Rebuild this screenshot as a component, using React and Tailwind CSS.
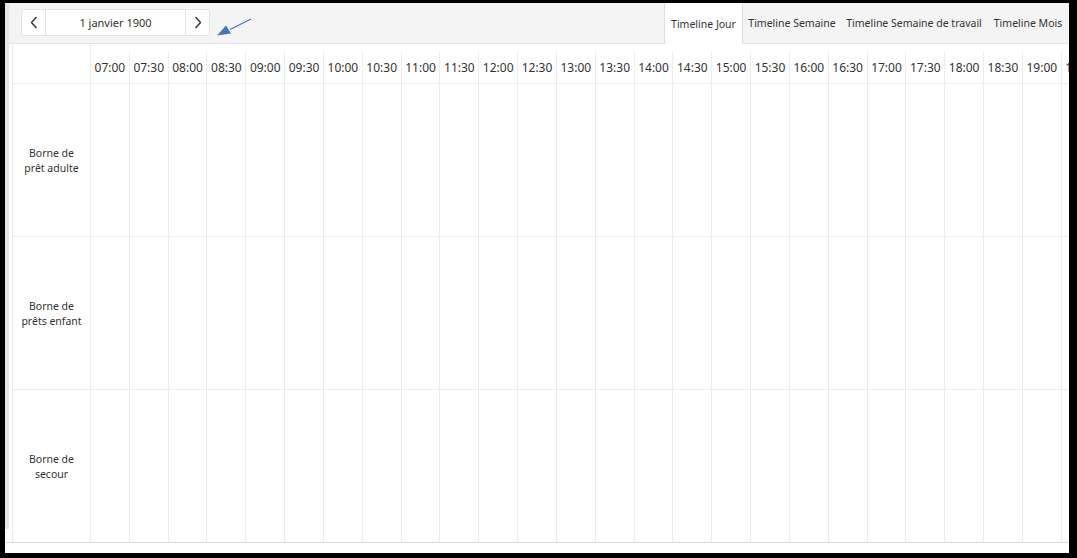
import React from "react";

const times = [];
for (let h = 7; h <= 19; h++) {
  times.push(`${String(h).padStart(2, "0")}:00`);
  times.push(`${String(h).padStart(2, "0")}:30`);
}

const resources = [
  ["Borne de", "prêt adulte"],
  ["Borne de", "prêts enfant"],
  ["Borne de", "secour"],
];

const tabs = [
  { label: "Timeline Jour", w: "w-[79px]", active: true },
  { label: "Timeline Semaine", w: "w-[98px]" },
  { label: "Timeline Semaine de travail", w: "w-[146px]" },
  { label: "Timeline Mois", w: "w-[82px]" },
];

function Slots({ header }) {
  return (
    <div className="flex h-full">
      {times.map((t) => (
        <div
          key={t}
          className="w-[38.84px] shrink-0 h-full border-r border-[#ececec] flex items-center justify-center text-[12px] text-[#333]"
        >
          {header ? t : null}
        </div>
      ))}
      {header ? (
        <div className="w-[8px] shrink-0 h-full overflow-hidden flex items-center pl-[4px] text-[12px] text-[#333]">
          <span>1</span>
        </div>
      ) : null}
    </div>
  );
}

export default function App() {
  return (
    <div
      className="w-[1077px] h-[558px] bg-black pt-[3px] pl-[5px] pr-[8px] pb-[5px]"
      style={{ fontFamily: '"Noto Sans", "Open Sans", sans-serif' }}
    >
      <div className="relative w-full h-full bg-white flex flex-col overflow-hidden">
        {/* toolbar */}
        <div className="h-[41px] shrink-0 bg-[#f4f4f4] border-b border-[#e3e3e3] flex items-stretch">
          <div className="flex-1 pl-[16px] pt-[6px]">
            <div className="w-[189px] h-[27px] bg-white border border-[#e4e4e4] rounded-[3px] flex items-stretch">
              <div className="w-[24px] border-r border-[#e4e4e4] flex items-center justify-center">
                <svg width="8" height="13" viewBox="0 0 8 13">
                  <path d="M6.5 1 L1.5 6.5 L6.5 12" fill="none" stroke="#333" strokeWidth="1.4" />
                </svg>
              </div>
              <div className="flex-1 flex items-center justify-center pt-[1px] text-[11px] text-[#333]">
                1 janvier 1900
              </div>
              <div className="w-[24px] border-l border-[#e4e4e4] flex items-center justify-center">
                <svg width="8" height="13" viewBox="0 0 8 13">
                  <path d="M1.5 1 L6.5 6.5 L1.5 12" fill="none" stroke="#333" strokeWidth="1.4" />
                </svg>
              </div>
            </div>
          </div>
          <div className="flex items-stretch">
            {tabs.map((t) => (
              <div
                key={t.label}
                className={`${t.w} flex items-center justify-center pt-[2px] text-[10.5px] text-[#333] whitespace-nowrap ${
                  t.active ? "bg-white border-x border-[#dedede] -mb-px" : ""
                }`}
              >
                {t.label}
              </div>
            ))}
          </div>
        </div>

        {/* grid */}
        <div className="h-[499px] shrink-0 border-b border-[#dcdcdc] flex">
          <div className="ml-[7px] flex-1 min-w-0 border-l border-[#ececec] flex">
            <div className="w-[78px] shrink-0 border-r border-[#ececec] flex flex-col">
              <div className="h-[40px] shrink-0 border-b border-[#ececec]" />
              {resources.map((r, i) => (
                <div
                  key={i}
                  className={`${i < 2 ? "h-[153px] border-b border-[#ececec]" : "h-[152px]"} shrink-0 flex flex-col items-center justify-center pt-[2px] text-[10.5px] leading-[15px] text-[#333] text-center`}
                >
                  <span>{r[0]}</span>
                  <span>{r[1]}</span>
                </div>
              ))}
            </div>
            <div className="flex-1 min-w-0 overflow-hidden flex flex-col">
              <div className="h-[40px] shrink-0 border-b border-[#ececec] pt-[8px]">
                <Slots header />
              </div>
              {resources.map((r, i) => (
                <div
                  key={i}
                  className={`${i < 2 ? "h-[153px] border-b border-[#ececec]" : "h-[152px]"} shrink-0`}
                >
                  <Slots />
                </div>
              ))}
            </div>
          </div>
        </div>

        {/* left scrollbar strip */}
        <div className="absolute left-0 top-0 w-[4px] h-[526px] bg-[#e6e6e6]" />

        {/* annotation arrow */}
        <svg
          className="absolute left-[208px] top-[13px]"
          width="40"
          height="24"
          viewBox="0 0 40 24"
        >
          <line x1="38" y1="3" x2="17" y2="13.5" stroke="#4472c4" strokeWidth="1.2" />
          <polygon points="4,19.5 13,9.5 18,17.5" fill="#4472c4" />
        </svg>
      </div>
    </div>
  );
}
